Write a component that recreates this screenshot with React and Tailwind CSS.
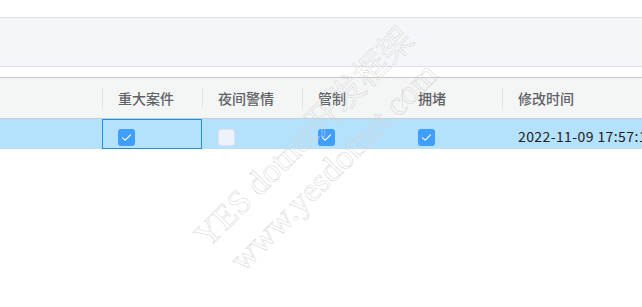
export default function App() {
  const cols = [
    { title: "重大案件", type: "check", checked: true, selected: true },
    { title: "夜间警情", type: "check", checked: false },
    { title: "管制", type: "check", checked: true },
    { title: "拥堵", type: "check", checked: true },
  ];

  return (
    <div className="relative h-[307px] w-full overflow-hidden bg-white font-['Noto_Sans_CJK_SC',sans-serif]">
      <div className="h-[17px]" />
      <div className="h-[50px] border-y border-[#dfe2e8] bg-[#f5f6fa]" />
      <div className="h-[10px]" />

      {/* table */}
      <div className="border-t border-[#c4c7cc]">
        <div className="flex h-[41px] border-b border-[#c8cacd] bg-[#f4f5f5]">
          <div className="w-[102px] shrink-0" />
          {cols.map((c) => (
            <HeaderCell key={c.title} title={c.title} />
          ))}
          <HeaderCell title="修改时间" grow />
        </div>

        <div className="flex h-[30px] bg-[#b4e1fb]">
          <div className="w-[102px] shrink-0" />
          {cols.map((c) => (
            <div
              key={c.title}
              className={
                c.selected
                  ? "flex w-[100px] shrink-0 items-center border border-[#1b8ee6] pl-[15px] pt-[7px]"
                  : "flex w-[100px] shrink-0 items-center pl-[16px] pt-[7px]"
              }
            >
              <Checkbox checked={c.checked} />
            </div>
          ))}
          <div className="flex flex-1 items-center pl-[16px] pt-[4px] text-[14px] tracking-[0.4px] whitespace-nowrap text-[#1f2022]">
            2022-11-09 17:57:12
          </div>
        </div>
      </div>

      {/* watermark */}
      <div className="pointer-events-none absolute left-[139px] top-[110px] flex h-[84px] w-[360px] rotate-[-45deg] flex-col items-center font-['Liberation_Serif','Noto_Sans_CJK_SC',serif] text-[34px] leading-[42px] text-transparent [-webkit-text-stroke:0.5px_#d6d6d6]">
        <div className="whitespace-nowrap">YES dotnet开发框架</div>
        <div className="whitespace-nowrap">www.yesdotnet.com</div>
      </div>
    </div>
  );
}

function HeaderCell({ title, grow }) {
  return (
    <div
      className={
        grow
          ? "flex flex-1 items-center"
          : "flex w-[100px] shrink-0 items-center"
      }
    >
      <div className="h-[20px] w-px bg-[#e2e3e5]" />
      <span className="pl-[15px] text-[14px] font-medium text-[#5f6266]">
        {title}
      </span>
    </div>
  );
}

function Checkbox({ checked }) {
  if (!checked) {
    return (
      <span className="block h-[17px] w-[17px] rounded-[3px] border border-[#dfe3ea] bg-[#eef2fb]" />
    );
  }
  return (
    <span className="flex h-[17px] w-[17px] items-center justify-center rounded-[3px] bg-[#409eff]">
      <svg width="11" height="9" viewBox="0 0 11 9" fill="none">
        <path
          d="M1.5 4.8 L4.2 7.2 L9.5 1.8"
          stroke="white"
          strokeWidth="1.1"
          strokeLinecap="round"
          strokeLinejoin="round"
        />
      </svg>
    </span>
  );
}
